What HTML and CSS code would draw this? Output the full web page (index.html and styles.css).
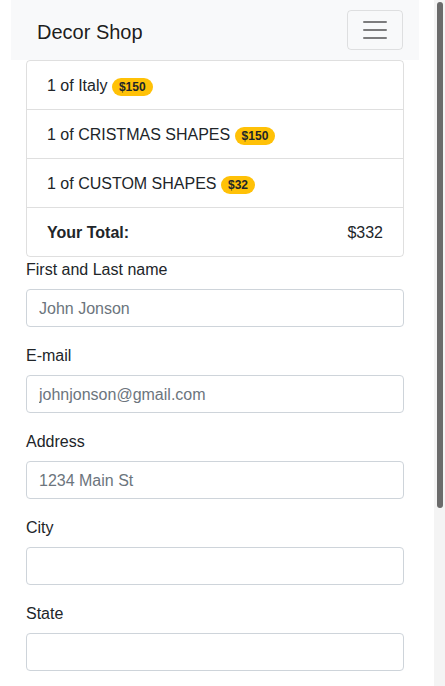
FILE: index.html
```html
<!DOCTYPE html>
<html lang="en">
<head>
<meta charset="utf-8">
<title>Decor Shop</title>
<link rel="stylesheet" href="styles.css">
</head>
<body>
<div class="page">
  <nav class="navbar">
    <a class="brand" href="#">Decor Shop</a>
    <button class="toggler" type="button" aria-label="Toggle navigation">
      <svg width="30" height="30" viewBox="0 0 30 30"><path stroke="rgba(0,0,0,0.5)" stroke-linecap="round" stroke-miterlimit="10" stroke-width="2" d="M4 7h22M4 15h22M4 23h22"/></svg>
    </button>
  </nav>
  <main class="content">
    <ul class="list">
      <li class="item">1 of Italy <span class="badge">$150</span></li>
      <li class="item">1 of CRISTMAS SHAPES <span class="badge">$150</span></li>
      <li class="item">1 of CUSTOM SHAPES <span class="badge">$32</span></li>
      <li class="item total"><strong>Your Total:</strong><span>$332</span></li>
    </ul>
    <form class="form">
      <div class="group">
        <label class="label" for="name">First and Last name</label>
        <input class="control" id="name" type="text" placeholder="John Jonson">
      </div>
      <div class="group">
        <label class="label" for="email">E-mail</label>
        <input class="control" id="email" type="email" placeholder="johnjonson@gmail.com">
      </div>
      <div class="group">
        <label class="label" for="address">Address</label>
        <input class="control" id="address" type="text" placeholder="1234 Main St">
      </div>
      <div class="group">
        <label class="label" for="city">City</label>
        <input class="control" id="city" type="text">
      </div>
      <div class="group">
        <label class="label" for="state">State</label>
        <input class="control" id="state" type="text">
      </div>
      <div class="group">
        <label class="label" for="zip">Zip</label>
        <input class="control" id="zip" type="text">
      </div>
      <div class="group">
        <label class="label" for="phone">Phone</label>
        <input class="control" id="phone" type="text">
      </div>
      <button class="submit" type="submit">Place order</button>
    </form>
  </main>
</div>
<div class="rail" aria-hidden="true"><div class="thumb"></div></div>
</body>
</html>
```
FILE: styles.css
```css
* { box-sizing: border-box; }
html, body { margin: 0; padding: 0; }
body {
  display: flex;
  align-items: flex-start;
  font-family: "Liberation Sans", Arial, sans-serif;
  font-size: 16px;
  line-height: 1.5;
  color: #212529;
  background: #fff;
}
.page { flex: 1; min-width: 0; padding: 0 11px 26px; }
.rail {
  flex: 0 0 15px;
  position: sticky;
  top: 0;
  height: 100vh;
  padding: 2px 2px 0 7px;
  background: linear-gradient(to right, #fff 0, #fff 4px, #f4f4f4 4px);
}
.thumb {
  width: 6px;
  height: 506px;
  border-radius: 3px;
  background: #6b6b6b;
}
.navbar {
  display: flex;
  align-items: center;
  justify-content: space-between;
  background: #f8f9fa;
  padding: 10px 16px 10px 26px;
}
.brand {
  font-size: 20px;
  line-height: 30px;
  padding-top: 4px;
  color: rgba(0,0,0,0.9);
  text-decoration: none;
}
.toggler {
  display: flex;
  align-items: center;
  justify-content: center;
  width: 56px;
  height: 40px;
  padding: 4px 12px;
  background: transparent;
  border: 1px solid rgba(0,0,0,0.1);
  border-radius: 4px;
}
.content { padding: 0 15px; }
.list {
  list-style: none;
  margin: 0;
  padding: 0;
  border: 1px solid rgba(0,0,0,0.125);
  border-radius: 4px;
}
.item {
  padding: 13px 20px 11px;
  border-top: 1px solid rgba(0,0,0,0.125);
}
.item:first-child { border-top: 0; }
.total { display: flex; justify-content: space-between; }
.total strong { font-weight: 700; }
.badge {
  display: inline-block;
  padding: 3px 7px;
  font-size: 12px;
  font-weight: 700;
  line-height: 1;
  color: #212529;
  background: #ffc107;
  border-radius: 10rem;
  vertical-align: baseline;
}
.form { margin: 0; }
.group { margin-bottom: 16px; }
.label { display: block; margin: 0 0 8px; padding: 1px 0 0; height: 24px; }
.control {
  display: block;
  width: 100%;
  height: 38px;
  padding: 7px 12px 5px;
  font-family: inherit;
  font-size: 16px;
  line-height: 1.5;
  color: #495057;
  background: #fff;
  border: 1px solid #ced4da;
  border-radius: 4px;
}
.control::placeholder { color: #6c757d; opacity: 1; }
.submit {
  display: block;
  width: 100%;
  height: 38px;
  font-family: inherit;
  font-size: 16px;
  color: #fff;
  background: #007bff;
  border: 1px solid #007bff;
  border-radius: 4px;
}
```
